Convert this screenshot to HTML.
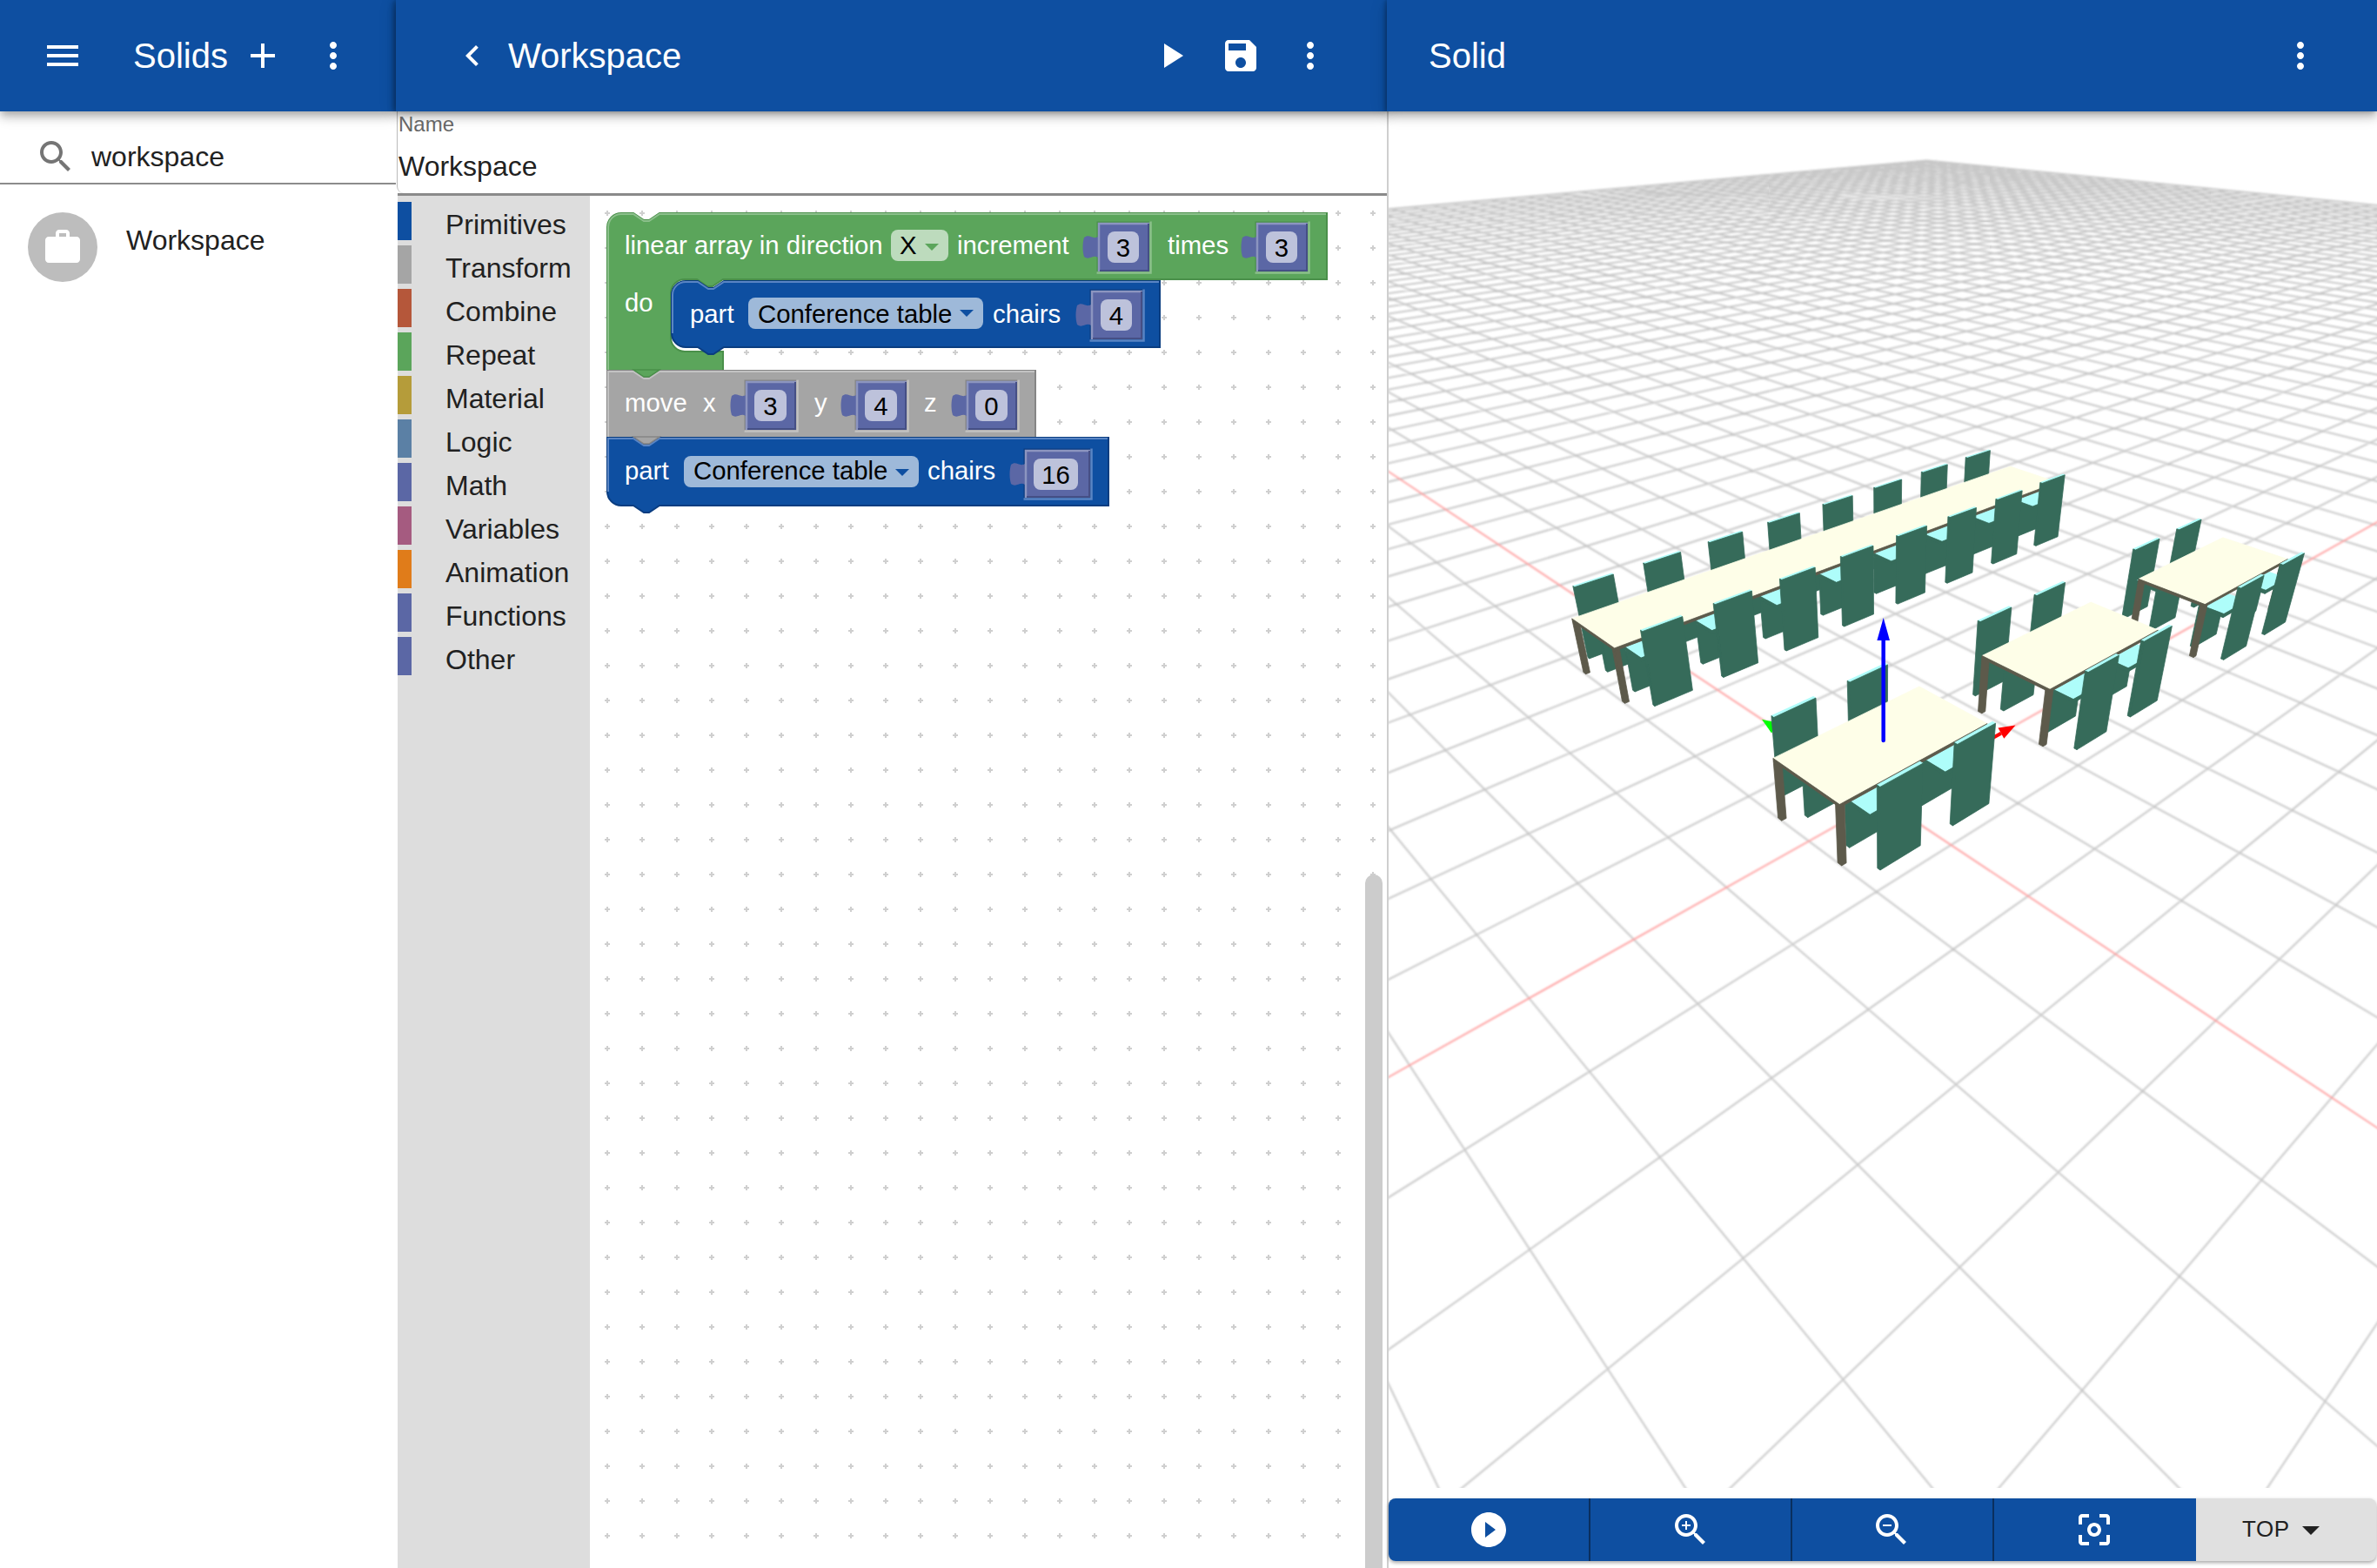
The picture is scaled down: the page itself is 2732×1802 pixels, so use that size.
<!DOCTYPE html>
<html><head><meta charset="utf-8">
<style>
html,body{margin:0;padding:0;width:2732px;height:1802px;overflow:hidden;background:#fff;font-family:"Liberation Sans",sans-serif;}
.abs{position:absolute;}
.hdr{position:absolute;top:0;height:128px;background:#0e4fa1;z-index:5;}
.t,svg.ic{z-index:8;}
.t{position:absolute;white-space:nowrap;line-height:1;}
svg.ic{position:absolute;width:48px;height:48px;fill:#fff;}
</style></head><body>
<!-- LEFT PANEL -->
<div class="abs" style="left:0;top:0;width:455px;height:1802px;background:#fff;"></div>
<div class="hdr" style="left:0;width:455px;box-shadow:0 4px 8px -2px rgba(0,0,0,.2),0 8px 10px 0 rgba(0,0,0,.14),0 2px 20px 0 rgba(0,0,0,.12);"></div>
<svg class="ic" style="left:48px;top:40px" viewBox="0 0 24 24"><path d="M3 18h18v-2H3v2zm0-5h18v-2H3v2zm0-7v2h18V6H3z"/></svg>
<div class="t" style="left:153px;top:44px;font-size:40px;color:#fff">Solids</div>
<svg class="ic" style="left:278px;top:40px" viewBox="0 0 24 24"><path d="M19 13h-6v6h-2v-6H5v-2h6V5h2v6h6v2z"/></svg>
<svg class="ic" style="left:359px;top:40px" viewBox="0 0 24 24"><path d="M12 8c1.1 0 2-.9 2-2s-.9-2-2-2-2 .9-2 2 .9 2 2 2zm0 2c-1.1 0-2 .9-2 2s.9 2 2 2 2-.9 2-2-.9-2-2-2zm0 6c-1.1 0-2 .9-2 2s.9 2 2 2 2-.9 2-2-.9-2-2-2z"/></svg>
<svg class="ic" style="left:40px;top:156px;fill:#757575" viewBox="0 0 24 24"><path d="M15.5 14h-.79l-.28-.27C15.41 12.59 16 11.11 16 9.5 16 5.91 13.09 3 9.5 3S3 5.91 3 9.5 5.91 16 9.5 16c1.61 0 3.09-.59 4.23-1.57l.27.28v.79l5 4.99L20.49 19l-4.99-5zm-6 0C7.01 14 5 11.99 5 9.5S7.01 5 9.5 5 14 7.01 14 9.5 11.99 14 9.5 14z"/></svg>
<div class="t" style="left:105px;top:164px;font-size:32px;color:#212121">workspace</div>
<div class="abs" style="left:0;top:210px;width:455px;height:2px;background:#8c8c8c"></div>
<div class="abs" style="left:32px;top:244px;width:80px;height:80px;border-radius:50%;background:#bdbdbd"></div>
<svg class="ic" style="left:48px;top:260px" viewBox="0 0 24 24"><path d="M20 6h-4V4c0-1.11-.89-2-2-2h-4c-1.11 0-2 .89-2 2v2H4c-1.11 0-1.99.89-1.99 2L2 19c0 1.11.89 2 2 2h16c1.11 0 2-.89 2-2V8c0-1.11-.89-2-2-2zm-6 0h-4V4h4v2z"/></svg>
<div class="t" style="left:145px;top:260px;font-size:32px;color:#212121">Workspace</div>

<!-- MIDDLE PANEL -->
<div class="abs" style="left:455px;top:0;width:1141px;height:1802px;background:#fff;"></div>
<div class="hdr" style="left:455px;width:1141px;z-index:6;box-shadow:0 4px 8px -2px rgba(0,0,0,.2),0 8px 10px 0 rgba(0,0,0,.14),0 2px 20px 0 rgba(0,0,0,.12),-3px 0 6px rgba(0,0,0,.25);"></div>
<svg class="ic" style="left:519px;top:40px" viewBox="0 0 24 24"><path d="M15.41 7.41L14 6l-6 6 6 6 1.41-1.41L10.83 12z"/></svg>
<div class="t" style="left:584px;top:44px;font-size:40px;color:#fff">Workspace</div>
<svg class="ic" style="left:1322px;top:40px" viewBox="0 0 24 24"><path d="M8 5v14l11-7z"/></svg>
<svg class="ic" style="left:1402px;top:40px" viewBox="0 0 24 24"><path d="M17 3H5c-1.11 0-2 .9-2 2v14c0 1.1.89 2 2 2h14c1.1 0 2-.9 2-2V7l-4-4zm-5 16c-1.66 0-3-1.34-3-3s1.34-3 3-3 3 1.34 3 3-1.34 3-3 3zm3-10H5V5h10v4z"/></svg>
<svg class="ic" style="left:1482px;top:40px" viewBox="0 0 24 24"><path d="M12 8c1.1 0 2-.9 2-2s-.9-2-2-2-2 .9-2 2 .9 2 2 2zm0 2c-1.1 0-2 .9-2 2s.9 2 2 2 2-.9 2-2-.9-2-2-2zm0 6c-1.1 0-2 .9-2 2s.9 2 2 2 2-.9 2-2-.9-2-2-2z"/></svg>
<!-- name field -->
<div class="abs" style="left:456px;top:128px;width:1138px;height:94px;background:#fff;border-left:1px solid #bbb;border-bottom-left-radius:8px;"></div>
<div class="abs" style="left:457px;top:222px;width:1137px;height:3px;background:#8a8a8a"></div>
<div class="t" style="left:458px;top:131px;font-size:24px;color:#666">Name</div>
<div class="t" style="left:458px;top:175px;font-size:32px;color:#212121">Workspace</div>

<div class="abs" style="left:457px;top:225px;width:221px;height:1577px;background:#dddddd"></div>
<div class="abs" style="left:457px;top:232px;width:16px;height:44px;background:#0e4fa1"></div>
<div class="t" style="left:512px;top:241.9px;font-size:32px;color:#212121">Primitives</div>
<div class="abs" style="left:457px;top:282px;width:16px;height:44px;background:#a5a5a5"></div>
<div class="t" style="left:512px;top:291.9px;font-size:32px;color:#212121">Transform</div>
<div class="abs" style="left:457px;top:332px;width:16px;height:44px;background:#b5573a"></div>
<div class="t" style="left:512px;top:341.9px;font-size:32px;color:#212121">Combine</div>
<div class="abs" style="left:457px;top:382px;width:16px;height:44px;background:#5ba55b"></div>
<div class="t" style="left:512px;top:391.9px;font-size:32px;color:#212121">Repeat</div>
<div class="abs" style="left:457px;top:432px;width:16px;height:44px;background:#b59c3a"></div>
<div class="t" style="left:512px;top:441.9px;font-size:32px;color:#212121">Material</div>
<div class="abs" style="left:457px;top:482px;width:16px;height:44px;background:#5b80a5"></div>
<div class="t" style="left:512px;top:491.9px;font-size:32px;color:#212121">Logic</div>
<div class="abs" style="left:457px;top:532px;width:16px;height:44px;background:#5b67a5"></div>
<div class="t" style="left:512px;top:541.9px;font-size:32px;color:#212121">Math</div>
<div class="abs" style="left:457px;top:582px;width:16px;height:44px;background:#a55b80"></div>
<div class="t" style="left:512px;top:591.9px;font-size:32px;color:#212121">Variables</div>
<div class="abs" style="left:457px;top:632px;width:16px;height:44px;background:#e07c1a"></div>
<div class="t" style="left:512px;top:641.9px;font-size:32px;color:#212121">Animation</div>
<div class="abs" style="left:457px;top:682px;width:16px;height:44px;background:#5b67a5"></div>
<div class="t" style="left:512px;top:691.9px;font-size:32px;color:#212121">Functions</div>
<div class="abs" style="left:457px;top:732px;width:16px;height:44px;background:#5b67a5"></div>
<div class="t" style="left:512px;top:741.9px;font-size:32px;color:#212121">Other</div>
<svg class="abs" style="left:678px;top:225px" width="916" height="1577" viewBox="678 225 916 1577" font-family="Liberation Sans" font-size="29.33"><defs><pattern id="gp" patternUnits="userSpaceOnUse" x="-2" y="-14" width="40" height="40"><rect x="17" y="18" width="6" height="2" fill="#cfcfcf"/><rect x="19" y="16" width="2" height="6" fill="#cfcfcf"/></pattern></defs><rect x="678" y="225" width="916" height="1577" fill="url(#gp)"/><path d="M698,261 A16,16 0 0 1 714,245 L728,245 l12,8 l6,0 l12,-8 L1525,245 L1525,321 L831,321 l-12,8 l-6,0 l-12,-8 L787,321 A16,16 0 0 0 771,337 L771,388 A16,16 0 0 0 787,404 L831,404 L831,426 L758,426 l-12,8 l-6,0 l-12,-8 L698,426 Z" fill="#5ba55b" stroke="#4a904a" stroke-width="2"/><path d="M699,426 L699,261 A15,15 0 0 1 714,246 L728,246 l12,8 l6,0 l12,-8 L1524,246" fill="none" stroke="#8cc08c" stroke-width="2"/><text x="718" y="292" fill="#fff">linear array in direction</text><rect x="1024" y="264" width="66" height="36" rx="8" fill="#bddbbd"/><text x="1034" y="292" fill="#000">X</text><path d="M1063,280 l16,0 l-8,8 z" fill="#5ba55b"/><text x="1100" y="292" fill="#fff">increment</text><text x="1342" y="292" fill="#fff">times</text><text x="718" y="358" fill="#fff">do</text><rect x="1260.5" y="254.5" width="62" height="59" fill="#4a904a"/><path d="M1322.5,254.5 V313.5 H1260.5" fill="none" stroke="#8cc08c" stroke-width="2.5"/><path d="M1262,256 H1321 V312 H1262 V296 c-6,-4 -10,4 -16,-1 c-2,-6 -2,-16 0,-22 c6,-5 10,3 16,-1 Z" fill="#5b67a5"/><path d="M1263,312 V257 H1321" fill="none" stroke="#8c95c0" stroke-width="2.5"/><path d="M1320,257 V311 H1264" fill="none" stroke="#454f85" stroke-width="2"/><rect x="1273" y="266" width="36" height="36" rx="8" fill="#bdc2db"/><text x="1291.0" y="294.5" text-anchor="middle" fill="#000">3</text><rect x="1442.5" y="254.5" width="62" height="59" fill="#4a904a"/><path d="M1504.5,254.5 V313.5 H1442.5" fill="none" stroke="#8cc08c" stroke-width="2.5"/><path d="M1444,256 H1503 V312 H1444 V296 c-6,-4 -10,4 -16,-1 c-2,-6 -2,-16 0,-22 c6,-5 10,3 16,-1 Z" fill="#5b67a5"/><path d="M1445,312 V257 H1503" fill="none" stroke="#8c95c0" stroke-width="2.5"/><path d="M1502,257 V311 H1446" fill="none" stroke="#454f85" stroke-width="2"/><rect x="1455" y="266" width="36" height="36" rx="8" fill="#bdc2db"/><text x="1473.0" y="294.5" text-anchor="middle" fill="#000">3</text><path d="M772,339 A16,16 0 0 1 788,323 L802,323 l12,8 l6,0 l12,-8 L1333,323 L1333,399 L832,399 l-12,8 l-6,0 l-12,-8 L788,399 A16,16 0 0 1 772,383 Z" fill="#0e4fa1" stroke="#0a3d80" stroke-width="2"/><path d="M773,383 L773,339 A15,15 0 0 1 788,324 L802,324 l12,8 l6,0 l12,-8 L1332,324" fill="none" stroke="#5a85c4" stroke-width="2"/><text x="793" y="371" fill="#fff">part</text><rect x="860" y="342" width="270" height="36" rx="8" fill="#9eb9d9"/><text x="871" y="371" fill="#000">Conference table</text><path d="M1103,356 l16,0 l-8,8 z" fill="#0e4fa1"/><text x="1141" y="371" fill="#fff">chairs</text><rect x="1252.5" y="332.5" width="62" height="59" fill="#0a3d80"/><path d="M1314.5,332.5 V391.5 H1252.5" fill="none" stroke="#5a85c4" stroke-width="2.5"/><path d="M1254,334 H1313 V390 H1254 V374 c-6,-4 -10,4 -16,-1 c-2,-6 -2,-16 0,-22 c6,-5 10,3 16,-1 Z" fill="#5b67a5"/><path d="M1255,390 V335 H1313" fill="none" stroke="#8c95c0" stroke-width="2.5"/><path d="M1312,335 V389 H1256" fill="none" stroke="#454f85" stroke-width="2"/><rect x="1265" y="344" width="36" height="36" rx="8" fill="#bdc2db"/><text x="1283.0" y="372.5" text-anchor="middle" fill="#000">4</text><path d="M698,426 L728,426 l12,8 l6,0 l12,-8 L1190,426 L1190,503 L758,503 l-12,8 l-6,0 l-12,-8 L698,503 Z" fill="#a5a5a5" stroke="#858585" stroke-width="2"/><path d="M699,503 L699,427 L728,427 l12,8 l6,0 l12,-8 L1189,427" fill="none" stroke="#c2c2c2" stroke-width="2"/><path d="M728,425 l12,8 l6,0 l12,-8 Z" fill="#5ba55b" stroke="#4a904a" stroke-width="1.5"/><text x="718" y="473" fill="#fff">move</text><text x="808" y="473" fill="#fff">x</text><text x="936" y="473" fill="#fff">y</text><text x="1062" y="473" fill="#fff">z</text><rect x="855.5" y="436.5" width="61" height="59" fill="#858585"/><path d="M916.5,436.5 V495.5 H855.5" fill="none" stroke="#c2c2c2" stroke-width="2.5"/><path d="M857,438 H915 V494 H857 V478 c-6,-4 -10,4 -16,-1 c-2,-6 -2,-16 0,-22 c6,-5 10,3 16,-1 Z" fill="#5b67a5"/><path d="M858,494 V439 H915" fill="none" stroke="#8c95c0" stroke-width="2.5"/><path d="M914,439 V493 H859" fill="none" stroke="#454f85" stroke-width="2"/><rect x="867" y="448" width="37" height="36" rx="8" fill="#bdc2db"/><text x="885.5" y="476.5" text-anchor="middle" fill="#000">3</text><rect x="982.5" y="436.5" width="61" height="59" fill="#858585"/><path d="M1043.5,436.5 V495.5 H982.5" fill="none" stroke="#c2c2c2" stroke-width="2.5"/><path d="M984,438 H1042 V494 H984 V478 c-6,-4 -10,4 -16,-1 c-2,-6 -2,-16 0,-22 c6,-5 10,3 16,-1 Z" fill="#5b67a5"/><path d="M985,494 V439 H1042" fill="none" stroke="#8c95c0" stroke-width="2.5"/><path d="M1041,439 V493 H986" fill="none" stroke="#454f85" stroke-width="2"/><rect x="994" y="448" width="37" height="36" rx="8" fill="#bdc2db"/><text x="1012.5" y="476.5" text-anchor="middle" fill="#000">4</text><rect x="1109.5" y="436.5" width="61" height="59" fill="#858585"/><path d="M1170.5,436.5 V495.5 H1109.5" fill="none" stroke="#c2c2c2" stroke-width="2.5"/><path d="M1111,438 H1169 V494 H1111 V478 c-6,-4 -10,4 -16,-1 c-2,-6 -2,-16 0,-22 c6,-5 10,3 16,-1 Z" fill="#5b67a5"/><path d="M1112,494 V439 H1169" fill="none" stroke="#8c95c0" stroke-width="2.5"/><path d="M1168,439 V493 H1113" fill="none" stroke="#454f85" stroke-width="2"/><rect x="1121" y="448" width="37" height="36" rx="8" fill="#bdc2db"/><text x="1139.5" y="476.5" text-anchor="middle" fill="#000">0</text><path d="M698,503 L728,503 l12,8 l6,0 l12,-8 L1274,503 L1274,581 L758,581 l-12,8 l-6,0 l-12,-8 L714,581 A16,16 0 0 1 698,565 Z" fill="#0e4fa1" stroke="#0a3d80" stroke-width="2"/><path d="M699,565 L699,504 L728,504 l12,8 l6,0 l12,-8 L1273,504" fill="none" stroke="#5a85c4" stroke-width="2"/><path d="M728,502 l12,8 l6,0 l12,-8 Z" fill="#a5a5a5" stroke="#858585" stroke-width="1.5"/><text x="718" y="551" fill="#fff">part</text><rect x="786" y="524" width="270" height="36" rx="8" fill="#9eb9d9"/><text x="797" y="551" fill="#000">Conference table</text><path d="M1029,539 l16,0 l-8,8 z" fill="#0e4fa1"/><text x="1066" y="551" fill="#fff">chairs</text><rect x="1176.5" y="515.5" width="78" height="58" fill="#0a3d80"/><path d="M1254.5,515.5 V573.5 H1176.5" fill="none" stroke="#5a85c4" stroke-width="2.5"/><path d="M1178,517 H1253 V572 H1178 V557 c-6,-4 -10,4 -16,-1 c-2,-6 -2,-16 0,-22 c6,-5 10,3 16,-1 Z" fill="#5b67a5"/><path d="M1179,572 V518 H1253" fill="none" stroke="#8c95c0" stroke-width="2.5"/><path d="M1252,518 V571 H1180" fill="none" stroke="#454f85" stroke-width="2"/><rect x="1188" y="527" width="51" height="36" rx="8" fill="#bdc2db"/><text x="1213.5" y="555.5" text-anchor="middle" fill="#000">16</text><path d="M1569,1802 V1015 A10,10 0 0 1 1589,1015 V1802 Z" fill="#cccccc"/></svg>
<div class="abs" style="left:1594px;top:128px;width:2px;height:1674px;background:#cfcfcf"></div>
<svg class="abs" style="left:1596px;top:128px" width="1136" height="1582" viewBox="1596 128 1136 1582">
<defs><filter id="gb" filterUnits="userSpaceOnUse" x="1596" y="128" width="1136" height="1582"><feGaussianBlur stdDeviation="0.8"/></filter></defs>
<g filter="url(#gb)"><path d="M1656.3,1716.0L1590.0,1578.4M2601.9,1716.0L2738.0,1512.0M1941.0,1716.0L1590.0,1178.1M2292.3,1716.0L2738.0,1193.4M2225.8,1716.0L1590.0,943.8M1982.6,1716.0L2738.0,988.7M2510.5,1716.0L1590.0,790.1M1673.0,1716.0L2738.0,846.2M2738.0,1666.8L1590.0,681.4M1590.0,1555.2L2738.0,741.2M2738.0,1460.0L1590.0,600.5M1590.0,1379.9L2738.0,660.6M2738.0,1172.6L1590.0,488.2M1590.0,1128.6L2738.0,545.1M2738.0,1068.8L1590.0,447.6M1590.0,1035.5L2738.0,502.3M2738.0,982.5L1590.0,413.9M1590.0,957.1L2738.0,466.3M2738.0,909.7L1590.0,385.4M1590.0,890.3L2738.0,435.6M2738.0,847.4L1590.0,361.1M1590.0,832.6L2738.0,409.1M2738.0,793.5L1590.0,340.0M1590.0,782.4L2738.0,386.0M2738.0,746.4L1590.0,321.6M1590.0,738.2L2738.0,365.7M2738.0,705.0L1590.0,305.4M1590.0,699.0L2738.0,347.7M2738.0,668.2L1590.0,291.0M1590.0,664.0L2738.0,331.6M2738.0,635.3L1590.0,278.2M1590.0,632.6L2738.0,317.2M2738.0,605.7L1590.0,266.6M1590.0,604.3L2738.0,304.2M2738.0,578.9L1590.0,256.1M1590.0,578.6L2738.0,292.3M2738.0,554.7L1590.0,246.6M1590.0,555.1L2738.0,281.6M2738.0,532.5L1598.3,240.1M1590.0,533.7L2738.0,271.7M2738.0,512.2L1622.2,237.9M1590.0,514.0L2738.0,262.6M2738.0,493.5L1645.5,235.8M1590.0,495.8L2738.0,254.3M2738.0,476.3L1668.3,233.8M1590.0,479.0L2738.0,246.6M2738.0,460.4L1690.7,231.8M1590.0,463.4L2738.0,239.4M2738.0,445.6L1712.5,229.8M1590.0,448.9L2724.8,235.2M2738.0,431.8L1733.9,227.9M1590.0,435.4L2702.4,233.0M2738.0,419.0L1754.8,226.0M1590.0,422.8L2680.6,230.8M2738.0,407.0L1775.3,224.1M1590.0,410.9L2659.3,228.7M2738.0,395.7L1795.4,222.3M1590.0,399.8L2638.4,226.6M2738.0,385.2L1815.0,220.5M1590.0,389.4L2618.1,224.6M2738.0,375.2L1834.3,218.8M1590.0,379.5L2598.2,222.6M2738.0,365.9L1853.1,217.1M1590.0,370.3L2578.7,220.7M2738.0,357.0L1871.6,215.4M1590.0,361.5L2559.7,218.8M2738.0,348.6L1889.8,213.8M1590.0,353.2L2541.1,217.0M2738.0,340.7L1907.5,212.2M1590.0,345.3L2522.9,215.1M2738.0,333.2L1925.0,210.6M1590.0,337.8L2505.0,213.4M2738.0,326.1L1942.1,209.0M1590.0,330.7L2487.6,211.6M2738.0,319.3L1958.9,207.5M1590.0,323.9L2470.5,209.9M2738.0,312.8L1975.3,206.0M1590.0,317.4L2453.8,208.3M2738.0,306.6L1991.5,204.6M1590.0,311.3L2437.4,206.6M2738.0,300.8L2007.3,203.1M1590.0,305.4L2421.3,205.0M2738.0,295.1L2022.9,201.7M1590.0,299.8L2405.6,203.5M2738.0,289.8L2038.2,200.4M1590.0,294.4L2390.2,201.9M2738.0,284.6L2053.2,199.0M1590.0,289.2L2375.1,200.4M2738.0,279.7L2068.0,197.7M1590.0,284.3L2360.3,199.0M2738.0,275.0L2082.4,196.4M1590.0,279.5L2345.7,197.5M2738.0,270.4L2096.7,195.1M1590.0,275.0L2331.5,196.1M2738.0,266.1L2110.7,193.8M1590.0,270.6L2317.5,194.7M2738.0,261.9L2124.4,192.6M1590.0,266.4L2303.7,193.3M2738.0,257.9L2137.9,191.3M1590.0,262.3L2290.3,192.0M2738.0,254.0L2151.2,190.1M1590.0,258.4L2277.1,190.7M2738.0,250.2L2164.3,189.0M1590.0,254.7L2264.1,189.4M2738.0,246.6L2177.1,187.8M1590.0,251.0L2251.3,188.1M2738.0,243.2L2189.8,186.7M1590.0,247.5L2238.8,186.9M2738.0,239.8L2202.2,185.5M1590.0,244.1L2226.5,185.6M2738.0,236.6L2214.4,184.4M1590.0,240.9L2214.4,184.4" stroke="#c8c8c8" stroke-width="2" fill="none"/>
<path d="M2738.0,1300.0L1590.0,538.0M1590.0,1241.2L2738.0,596.8" stroke="#ff9c9c" stroke-width="1.8" fill="none"/></g>
<path d="M2164.0,919.0L2299.9,842.7" stroke="#ff0000" stroke-width="4"/><path d="M2316.5,833.4L2303.3,848.8L2296.5,836.6Z" fill="#ff0000"/>
<path d="M2164.0,919.0L2040.0,836.7" stroke="#00ff00" stroke-width="4"/><path d="M2025.0,826.7L2043.8,830.8L2036.1,842.5Z" fill="#00ff00"/>
<path d="M2261.3,526.3L2287.4,517.7L2285.3,517.0L2259.2,525.6Z" fill="#aefdfa" stroke="#aefdfa" stroke-width="0.8" stroke-linejoin="round"/>
<path d="M2257.7,595.3L2255.7,594.5L2259.2,525.6L2261.3,526.3ZM2257.7,595.3L2282.9,585.8L2287.4,517.7L2261.3,526.3Z" fill="#366b5a" stroke="#366b5a" stroke-width="0.8" stroke-linejoin="round"/>
<path d="M2210.4,543.0L2238.3,533.9L2236.2,533.1L2208.3,542.3Z" fill="#aefdfa" stroke="#aefdfa" stroke-width="0.8" stroke-linejoin="round"/>
<path d="M2208.6,613.7L2206.6,612.9L2208.3,542.3L2210.4,543.0ZM2208.6,613.7L2235.5,603.6L2238.3,533.9L2210.4,543.0Z" fill="#366b5a" stroke="#366b5a" stroke-width="0.8" stroke-linejoin="round"/>
<path d="M2155.7,561.0L2185.7,551.1L2183.6,550.4L2153.7,560.2Z" fill="#aefdfa" stroke="#aefdfa" stroke-width="0.8" stroke-linejoin="round"/>
<path d="M2156.0,633.4L2154.1,632.5L2153.7,560.2L2155.7,561.0ZM2156.0,633.4L2184.9,622.6L2185.7,551.1L2155.7,561.0Z" fill="#366b5a" stroke="#366b5a" stroke-width="0.8" stroke-linejoin="round"/>
<path d="M2096.9,580.3L2129.2,569.7L2127.2,568.9L2094.9,579.4Z" fill="#aefdfa" stroke="#aefdfa" stroke-width="0.8" stroke-linejoin="round"/>
<path d="M2099.7,654.6L2097.7,653.6L2094.9,579.4L2096.9,580.3ZM2099.7,654.6L2130.6,643.0L2129.2,569.7L2096.9,580.3Z" fill="#366b5a" stroke="#366b5a" stroke-width="0.8" stroke-linejoin="round"/>
<path d="M2033.6,601.1L2068.4,589.7L2066.4,588.8L2031.6,600.2Z" fill="#aefdfa" stroke="#aefdfa" stroke-width="0.8" stroke-linejoin="round"/>
<path d="M2039.1,677.3L2037.2,676.2L2031.6,600.2L2033.6,601.1ZM2039.1,677.3L2072.4,664.8L2068.4,589.7L2033.6,601.1Z" fill="#366b5a" stroke="#366b5a" stroke-width="0.8" stroke-linejoin="round"/>
<path d="M1965.0,623.6L2002.7,611.3L2000.7,610.3L1963.1,622.6Z" fill="#aefdfa" stroke="#aefdfa" stroke-width="0.8" stroke-linejoin="round"/>
<path d="M1973.9,701.8L1972.0,700.7L1963.1,622.6L1965.0,623.6ZM1973.9,701.8L2009.7,688.3L2002.7,611.3L1965.0,623.6Z" fill="#366b5a" stroke="#366b5a" stroke-width="0.8" stroke-linejoin="round"/>
<path d="M1890.7,648.1L1931.6,634.6L1929.6,633.6L1888.7,647.0Z" fill="#aefdfa" stroke="#aefdfa" stroke-width="0.8" stroke-linejoin="round"/>
<path d="M1903.3,728.2L1901.4,727.0L1888.7,647.0L1890.7,648.1ZM1903.3,728.2L1942.1,713.7L1931.6,634.6L1890.7,648.1Z" fill="#366b5a" stroke="#366b5a" stroke-width="0.8" stroke-linejoin="round"/>
<path d="M1809.7,674.7L1854.3,660.0L1852.4,658.9L1807.8,673.5Z" fill="#aefdfa" stroke="#aefdfa" stroke-width="0.8" stroke-linejoin="round"/>
<path d="M1826.7,756.9L1825.0,755.6L1807.8,673.5L1809.7,674.7ZM1826.7,756.9L1868.9,741.1L1854.3,660.0L1809.7,674.7Z" fill="#366b5a" stroke="#366b5a" stroke-width="0.8" stroke-linejoin="round"/>
<path d="M2310.6,540.5L2313.4,539.6L2310.3,538.5L2307.5,539.5ZM2306.8,588.9L2303.7,587.8L2307.5,539.5L2310.6,540.5ZM2306.8,588.9L2309.5,587.9L2313.4,539.6L2310.6,540.5Z" fill="#5d5a4b" stroke="#5d5a4b" stroke-width="0.8" stroke-linejoin="round"/>
<path d="M2283.5,566.6L2309.2,557.3L2306.5,556.4L2280.8,565.7Z" fill="#aefdfa" stroke="#aefdfa" stroke-width="0.8" stroke-linejoin="round"/>
<path d="M2281.0,604.4L2278.4,603.4L2280.8,565.7L2283.5,566.6ZM2281.0,604.4L2306.2,594.6L2309.2,557.3L2283.5,566.6Z" fill="#366b5a" stroke="#366b5a" stroke-width="0.8" stroke-linejoin="round"/>
<path d="M2283.7,563.1L2309.4,553.9L2290.7,547.4L2264.9,556.4Z" fill="#aefdfa" stroke="#aefdfa" stroke-width="0.8" stroke-linejoin="round"/>
<path d="M2283.5,566.6L2264.8,559.8L2264.9,556.4L2283.7,563.1ZM2283.5,566.6L2309.2,557.3L2309.4,553.9L2283.7,563.1Z" fill="#366b5a" stroke="#366b5a" stroke-width="0.8" stroke-linejoin="round"/>
<path d="M2233.3,584.8L2260.8,574.8L2258.2,573.8L2230.7,583.7Z" fill="#aefdfa" stroke="#aefdfa" stroke-width="0.8" stroke-linejoin="round"/>
<path d="M2231.8,623.4L2229.3,622.3L2230.7,583.7L2233.3,584.8ZM2231.8,623.4L2258.8,613.0L2260.8,574.8L2233.3,584.8Z" fill="#366b5a" stroke="#366b5a" stroke-width="0.8" stroke-linejoin="round"/>
<path d="M2233.5,581.2L2261.0,571.3L2242.3,564.3L2214.7,573.9Z" fill="#aefdfa" stroke="#aefdfa" stroke-width="0.8" stroke-linejoin="round"/>
<path d="M2233.3,584.8L2214.6,577.5L2214.7,573.9L2233.5,581.2ZM2233.3,584.8L2260.8,574.8L2261.0,571.3L2233.5,581.2Z" fill="#366b5a" stroke="#366b5a" stroke-width="0.8" stroke-linejoin="round"/>
<path d="M2179.5,604.2L2209.1,593.5L2206.4,592.5L2176.9,603.1Z" fill="#aefdfa" stroke="#aefdfa" stroke-width="0.8" stroke-linejoin="round"/>
<path d="M2179.2,643.8L2176.6,642.7L2176.9,603.1L2179.5,604.2ZM2179.2,643.8L2208.1,632.6L2209.1,593.5L2179.5,604.2Z" fill="#366b5a" stroke="#366b5a" stroke-width="0.8" stroke-linejoin="round"/>
<path d="M2179.6,600.5L2209.1,589.9L2190.5,582.4L2160.9,592.8Z" fill="#aefdfa" stroke="#aefdfa" stroke-width="0.8" stroke-linejoin="round"/>
<path d="M2179.5,604.2L2160.9,596.4L2160.9,592.8L2179.6,600.5ZM2179.5,604.2L2209.1,593.5L2209.1,589.9L2179.6,600.5Z" fill="#366b5a" stroke="#366b5a" stroke-width="0.8" stroke-linejoin="round"/>
<path d="M2121.7,625.2L2153.5,613.7L2150.9,612.5L2119.1,624.0Z" fill="#aefdfa" stroke="#aefdfa" stroke-width="0.8" stroke-linejoin="round"/>
<path d="M2122.7,665.7L2120.1,664.5L2119.1,624.0L2121.7,625.2ZM2122.7,665.7L2153.7,653.7L2153.5,613.7L2121.7,625.2Z" fill="#366b5a" stroke="#366b5a" stroke-width="0.8" stroke-linejoin="round"/>
<path d="M2121.6,621.4L2153.4,609.9L2134.9,601.9L2103.1,613.0Z" fill="#aefdfa" stroke="#aefdfa" stroke-width="0.8" stroke-linejoin="round"/>
<path d="M2121.7,625.2L2103.2,616.8L2103.1,613.0L2121.6,621.4ZM2121.7,625.2L2153.5,613.7L2153.4,609.9L2121.6,621.4Z" fill="#366b5a" stroke="#366b5a" stroke-width="0.8" stroke-linejoin="round"/>
<path d="M2361.7,557.8L2364.5,556.7L2361.1,555.6L2358.3,556.6ZM2356.3,607.3L2353.1,606.1L2358.3,556.6L2361.7,557.8ZM2356.3,607.3L2359.0,606.2L2364.5,556.7L2361.7,557.8Z" fill="#5d5a4b" stroke="#5d5a4b" stroke-width="0.8" stroke-linejoin="round"/>
<path d="M2318.5,579.3L2344.2,569.6L2341.4,568.6L2315.8,578.3Z" fill="#aefdfa" stroke="#aefdfa" stroke-width="0.8" stroke-linejoin="round"/>
<path d="M2315.3,617.7L2312.6,616.6L2315.8,578.3L2318.5,579.3ZM2315.3,617.7L2340.4,607.4L2344.2,569.6L2318.5,579.3Z" fill="#366b5a" stroke="#366b5a" stroke-width="0.8" stroke-linejoin="round"/>
<path d="M2336.2,582.0L2361.9,572.1L2341.8,565.1L2316.1,574.7Z" fill="#aefdfa" stroke="#aefdfa" stroke-width="0.8" stroke-linejoin="round"/>
<path d="M2335.9,585.6L2315.8,578.3L2316.1,574.7L2336.2,582.0ZM2335.9,585.6L2361.5,575.6L2361.9,572.1L2336.2,582.0Z" fill="#366b5a" stroke="#366b5a" stroke-width="0.8" stroke-linejoin="round"/>
<path d="M2268.4,598.4L2295.9,587.9L2293.1,586.9L2265.6,597.3Z" fill="#aefdfa" stroke="#aefdfa" stroke-width="0.8" stroke-linejoin="round"/>
<path d="M2266.1,637.7L2263.4,636.6L2265.6,597.3L2268.4,598.4ZM2266.1,637.7L2293.1,626.7L2295.9,587.9L2268.4,598.4Z" fill="#366b5a" stroke="#366b5a" stroke-width="0.8" stroke-linejoin="round"/>
<path d="M2286.0,601.4L2313.6,590.8L2293.4,583.3L2265.8,593.6Z" fill="#aefdfa" stroke="#aefdfa" stroke-width="0.8" stroke-linejoin="round"/>
<path d="M2285.7,605.1L2265.6,597.3L2265.8,593.6L2286.0,601.4ZM2285.7,605.1L2313.3,594.4L2313.6,590.8L2286.0,601.4Z" fill="#366b5a" stroke="#366b5a" stroke-width="0.8" stroke-linejoin="round"/>
<path d="M2214.5,618.9L2244.1,607.6L2241.3,606.5L2211.7,617.7Z" fill="#aefdfa" stroke="#aefdfa" stroke-width="0.8" stroke-linejoin="round"/>
<path d="M2213.3,659.1L2210.6,657.9L2211.7,617.7L2214.5,618.9ZM2213.3,659.1L2242.3,647.4L2244.1,607.6L2214.5,618.9Z" fill="#366b5a" stroke="#366b5a" stroke-width="0.8" stroke-linejoin="round"/>
<path d="M2232.0,622.3L2261.6,610.8L2241.5,602.8L2211.8,614.0Z" fill="#aefdfa" stroke="#aefdfa" stroke-width="0.8" stroke-linejoin="round"/>
<path d="M2231.8,626.1L2211.7,617.7L2211.8,614.0L2232.0,622.3ZM2231.8,626.1L2261.4,614.6L2261.6,610.8L2232.0,622.3Z" fill="#366b5a" stroke="#366b5a" stroke-width="0.8" stroke-linejoin="round"/>
<path d="M2156.4,640.9L2188.3,628.8L2185.6,627.6L2153.7,639.7Z" fill="#aefdfa" stroke="#aefdfa" stroke-width="0.8" stroke-linejoin="round"/>
<path d="M2156.6,682.2L2153.9,680.9L2153.7,639.7L2156.4,640.9ZM2156.6,682.2L2187.8,669.5L2188.3,628.8L2156.4,640.9Z" fill="#366b5a" stroke="#366b5a" stroke-width="0.8" stroke-linejoin="round"/>
<path d="M2173.7,644.9L2205.7,632.5L2185.6,623.8L2153.7,635.8Z" fill="#aefdfa" stroke="#aefdfa" stroke-width="0.8" stroke-linejoin="round"/>
<path d="M2173.6,648.8L2153.7,639.7L2153.7,635.8L2173.7,644.9ZM2173.6,648.8L2205.6,636.3L2205.7,632.5L2173.7,644.9Z" fill="#366b5a" stroke="#366b5a" stroke-width="0.8" stroke-linejoin="round"/>
<path d="M2059.3,647.7L2093.6,635.3L2091.0,634.1L2056.8,646.4Z" fill="#aefdfa" stroke="#aefdfa" stroke-width="0.8" stroke-linejoin="round"/>
<path d="M2061.8,689.3L2059.3,688.0L2056.8,646.4L2059.3,647.7ZM2061.8,689.3L2095.2,676.3L2093.6,635.3L2059.3,647.7Z" fill="#366b5a" stroke="#366b5a" stroke-width="0.8" stroke-linejoin="round"/>
<path d="M2059.1,643.8L2093.4,631.5L2075.1,622.9L2040.8,634.8Z" fill="#aefdfa" stroke="#aefdfa" stroke-width="0.8" stroke-linejoin="round"/>
<path d="M2059.3,647.7L2041.1,638.7L2040.8,634.8L2059.1,643.8ZM2059.3,647.7L2093.6,635.3L2093.4,631.5L2059.1,643.8Z" fill="#366b5a" stroke="#366b5a" stroke-width="0.8" stroke-linejoin="round"/>
<path d="M1991.9,672.1L2029.0,658.7L2026.4,657.4L1989.3,670.8Z" fill="#aefdfa" stroke="#aefdfa" stroke-width="0.8" stroke-linejoin="round"/>
<path d="M1996.1,714.7L1993.7,713.3L1989.3,670.8L1991.9,672.1ZM1996.1,714.7L2032.2,700.8L2029.0,658.7L1991.9,672.1Z" fill="#366b5a" stroke="#366b5a" stroke-width="0.8" stroke-linejoin="round"/>
<path d="M1991.5,668.1L2028.6,654.8L2010.5,645.4L1973.5,658.4Z" fill="#aefdfa" stroke="#aefdfa" stroke-width="0.8" stroke-linejoin="round"/>
<path d="M1991.9,672.1L1974.0,662.3L1973.5,658.4L1991.5,668.1ZM1991.9,672.1L2029.0,658.7L2028.6,654.8L1991.5,668.1Z" fill="#366b5a" stroke="#366b5a" stroke-width="0.8" stroke-linejoin="round"/>
<path d="M1918.7,698.6L1958.9,684.0L1956.5,682.6L1916.2,697.1Z" fill="#aefdfa" stroke="#aefdfa" stroke-width="0.8" stroke-linejoin="round"/>
<path d="M1925.0,742.3L1922.6,740.7L1916.2,697.1L1918.7,698.6ZM1925.0,742.3L1964.1,727.1L1958.9,684.0L1918.7,698.6Z" fill="#366b5a" stroke="#366b5a" stroke-width="0.8" stroke-linejoin="round"/>
<path d="M1918.1,694.5L1958.5,680.0L1940.7,669.9L1900.6,683.9Z" fill="#aefdfa" stroke="#aefdfa" stroke-width="0.8" stroke-linejoin="round"/>
<path d="M1918.7,698.6L1901.2,688.0L1900.6,683.9L1918.1,694.5ZM1918.7,698.6L1958.9,684.0L1958.5,680.0L1918.1,694.5Z" fill="#366b5a" stroke="#366b5a" stroke-width="0.8" stroke-linejoin="round"/>
<path d="M1839.0,727.4L1882.9,711.6L1880.5,710.0L1836.6,725.8Z" fill="#aefdfa" stroke="#aefdfa" stroke-width="0.8" stroke-linejoin="round"/>
<path d="M1847.8,772.2L1845.4,770.5L1836.6,725.8L1839.0,727.4ZM1847.8,772.2L1890.3,755.8L1882.9,711.6L1839.0,727.4Z" fill="#366b5a" stroke="#366b5a" stroke-width="0.8" stroke-linejoin="round"/>
<path d="M1838.2,723.2L1882.2,707.4L1865.0,696.4L1821.3,711.7Z" fill="#aefdfa" stroke="#aefdfa" stroke-width="0.8" stroke-linejoin="round"/>
<path d="M1839.0,727.4L1822.1,715.9L1821.3,711.7L1838.2,723.2ZM1839.0,727.4L1882.9,711.6L1882.2,707.4L1838.2,723.2Z" fill="#366b5a" stroke="#366b5a" stroke-width="0.8" stroke-linejoin="round"/>
<path d="M1810.1,715.8L1815.2,714.0L1812.4,712.1L1807.3,713.9ZM1822.6,774.7L1819.9,772.6L1807.3,713.9L1810.1,715.8ZM1822.6,774.7L1827.5,772.8L1815.2,714.0L1810.1,715.8Z" fill="#5d5a4b" stroke="#5d5a4b" stroke-width="0.8" stroke-linejoin="round"/>
<path d="M2093.7,664.8L2128.2,651.7L2125.4,650.4L2091.0,663.4Z" fill="#aefdfa" stroke="#aefdfa" stroke-width="0.8" stroke-linejoin="round"/>
<path d="M2095.4,707.1L2092.7,705.7L2091.0,663.4L2093.7,664.8ZM2095.4,707.1L2129.0,693.4L2128.2,651.7L2093.7,664.8Z" fill="#366b5a" stroke="#366b5a" stroke-width="0.8" stroke-linejoin="round"/>
<path d="M2110.6,669.3L2145.3,655.8L2125.3,646.5L2090.8,659.5Z" fill="#aefdfa" stroke="#aefdfa" stroke-width="0.8" stroke-linejoin="round"/>
<path d="M2110.7,673.2L2091.0,663.4L2090.8,659.5L2110.6,669.3ZM2110.7,673.2L2145.3,659.8L2145.3,655.8L2110.6,669.3Z" fill="#366b5a" stroke="#366b5a" stroke-width="0.8" stroke-linejoin="round"/>
<path d="M2025.6,690.6L2063.1,676.4L2060.4,675.0L2023.0,689.2Z" fill="#aefdfa" stroke="#aefdfa" stroke-width="0.8" stroke-linejoin="round"/>
<path d="M2029.2,734.0L2026.6,732.5L2023.0,689.2L2025.6,690.6ZM2029.2,734.0L2065.6,719.2L2063.1,676.4L2025.6,690.6Z" fill="#366b5a" stroke="#366b5a" stroke-width="0.8" stroke-linejoin="round"/>
<path d="M2042.2,695.7L2079.8,681.2L2060.1,671.0L2022.6,685.1Z" fill="#aefdfa" stroke="#aefdfa" stroke-width="0.8" stroke-linejoin="round"/>
<path d="M2042.5,699.8L2023.0,689.2L2022.6,685.1L2042.2,695.7ZM2042.5,699.8L2080.0,685.2L2079.8,681.2L2042.2,695.7Z" fill="#366b5a" stroke="#366b5a" stroke-width="0.8" stroke-linejoin="round"/>
<path d="M1951.7,718.7L1992.4,703.3L1989.8,701.7L1949.1,717.1Z" fill="#aefdfa" stroke="#aefdfa" stroke-width="0.8" stroke-linejoin="round"/>
<path d="M1957.3,763.2L1954.8,761.5L1949.1,717.1L1951.7,718.7ZM1957.3,763.2L1996.9,747.1L1992.4,703.3L1951.7,718.7Z" fill="#366b5a" stroke="#366b5a" stroke-width="0.8" stroke-linejoin="round"/>
<path d="M1967.6,724.6L2008.7,708.7L1989.3,697.6L1948.5,713.0Z" fill="#aefdfa" stroke="#aefdfa" stroke-width="0.8" stroke-linejoin="round"/>
<path d="M1968.1,728.8L1949.1,717.1L1948.5,713.0L1967.6,724.6ZM1968.1,728.8L2009.1,712.8L2008.7,708.7L1967.6,724.6Z" fill="#366b5a" stroke="#366b5a" stroke-width="0.8" stroke-linejoin="round"/>
<path d="M1870.9,749.4L1915.4,732.5L1912.8,730.8L1868.4,747.7Z" fill="#aefdfa" stroke="#aefdfa" stroke-width="0.8" stroke-linejoin="round"/>
<path d="M1879.1,795.0L1876.6,793.2L1868.4,747.7L1870.9,749.4ZM1879.1,795.0L1922.2,777.5L1915.4,732.5L1870.9,749.4Z" fill="#366b5a" stroke="#366b5a" stroke-width="0.8" stroke-linejoin="round"/>
<path d="M1886.1,756.1L1931.1,738.7L1912.2,726.6L1867.6,743.4Z" fill="#aefdfa" stroke="#aefdfa" stroke-width="0.8" stroke-linejoin="round"/>
<path d="M1886.9,760.4L1868.4,747.7L1867.6,743.4L1886.1,756.1ZM1886.9,760.4L1931.7,743.0L1931.1,738.7L1886.1,756.1Z" fill="#366b5a" stroke="#366b5a" stroke-width="0.8" stroke-linejoin="round"/>
<path d="M1856.2,747.9L1861.4,746.0L1858.3,743.8L1853.1,745.8ZM1867.5,808.3L1864.5,806.1L1853.1,745.8L1856.2,747.9ZM1867.5,808.3L1872.5,806.3L1861.4,746.0L1856.2,747.9Z" fill="#5d5a4b" stroke="#5d5a4b" stroke-width="0.8" stroke-linejoin="round"/>
<path d="M1855.6,744.9L2364.7,554.2L2310.5,536.1L1806.7,710.9Z" fill="#fefee8" stroke="#fefee8" stroke-width="0.8" stroke-linejoin="round"/>
<path d="M1856.2,747.9L1807.3,713.9L1806.7,710.9L1855.6,744.9ZM1856.2,747.9L2364.5,556.7L2364.7,554.2L1855.6,744.9Z" fill="#5d5a4b" stroke="#5d5a4b" stroke-width="0.8" stroke-linejoin="round"/>
<path d="M2347.2,555.4L2373.2,545.8L2370.9,545.0L2344.8,554.6Z" fill="#aefdfa" stroke="#aefdfa" stroke-width="0.8" stroke-linejoin="round"/>
<path d="M2340.0,627.3L2337.7,626.4L2344.8,554.6L2347.2,555.4ZM2340.0,627.3L2365.1,616.7L2373.2,545.8L2347.2,555.4Z" fill="#366b5a" stroke="#366b5a" stroke-width="0.8" stroke-linejoin="round"/>
<path d="M2296.2,574.3L2324.2,563.9L2321.8,563.1L2293.9,573.4Z" fill="#aefdfa" stroke="#aefdfa" stroke-width="0.8" stroke-linejoin="round"/>
<path d="M2290.8,648.0L2288.6,647.0L2293.9,573.4L2296.2,574.3ZM2290.8,648.0L2317.8,636.6L2324.2,563.9L2296.2,574.3Z" fill="#366b5a" stroke="#366b5a" stroke-width="0.8" stroke-linejoin="round"/>
<path d="M2241.3,594.6L2271.5,583.5L2269.1,582.6L2238.9,593.7Z" fill="#aefdfa" stroke="#aefdfa" stroke-width="0.8" stroke-linejoin="round"/>
<path d="M2238.0,670.2L2235.8,669.2L2238.9,593.7L2241.3,594.6ZM2238.0,670.2L2267.0,658.0L2271.5,583.5L2241.3,594.6Z" fill="#366b5a" stroke="#366b5a" stroke-width="0.8" stroke-linejoin="round"/>
<path d="M2181.9,616.6L2214.6,604.5L2212.2,603.6L2179.6,615.6Z" fill="#aefdfa" stroke="#aefdfa" stroke-width="0.8" stroke-linejoin="round"/>
<path d="M2181.2,694.1L2178.9,693.0L2179.6,615.6L2181.9,616.6ZM2181.2,694.1L2212.4,681.0L2214.6,604.5L2181.9,616.6Z" fill="#366b5a" stroke="#366b5a" stroke-width="0.8" stroke-linejoin="round"/>
<path d="M2117.6,640.4L2153.0,627.3L2150.7,626.3L2115.3,639.4Z" fill="#aefdfa" stroke="#aefdfa" stroke-width="0.8" stroke-linejoin="round"/>
<path d="M2119.7,720.0L2117.5,718.8L2115.3,639.4L2117.6,640.4ZM2119.7,720.0L2153.5,705.8L2153.0,627.3L2117.6,640.4Z" fill="#366b5a" stroke="#366b5a" stroke-width="0.8" stroke-linejoin="round"/>
<path d="M2047.7,666.4L2086.2,652.1L2083.9,651.0L2045.4,665.2Z" fill="#aefdfa" stroke="#aefdfa" stroke-width="0.8" stroke-linejoin="round"/>
<path d="M2053.2,748.0L2051.0,746.7L2045.4,665.2L2047.7,666.4ZM2053.2,748.0L2089.8,732.6L2086.2,652.1L2047.7,666.4Z" fill="#366b5a" stroke="#366b5a" stroke-width="0.8" stroke-linejoin="round"/>
<path d="M1971.3,694.7L2013.4,679.1L2011.1,677.8L1969.1,693.4Z" fill="#aefdfa" stroke="#aefdfa" stroke-width="0.8" stroke-linejoin="round"/>
<path d="M1980.9,778.4L1978.7,777.0L1969.1,693.4L1971.3,694.7ZM1980.9,778.4L2020.7,761.7L2013.4,679.1L1971.3,694.7Z" fill="#366b5a" stroke="#366b5a" stroke-width="0.8" stroke-linejoin="round"/>
<path d="M1887.6,725.7L1933.8,708.6L1931.6,707.2L1885.5,724.2Z" fill="#aefdfa" stroke="#aefdfa" stroke-width="0.8" stroke-linejoin="round"/>
<path d="M1901.9,811.6L1899.9,810.1L1885.5,724.2L1887.6,725.7ZM1901.9,811.6L1945.4,793.3L1933.8,708.6L1887.6,725.7Z" fill="#366b5a" stroke="#366b5a" stroke-width="0.8" stroke-linejoin="round"/>
<path d="M2504.7,608.8L2530.1,597.0L2527.2,596.1L2501.8,607.8Z" fill="#aefdfa" stroke="#aefdfa" stroke-width="0.8" stroke-linejoin="round"/>
<path d="M2489.9,685.6L2487.2,684.6L2501.8,607.8L2504.7,608.8ZM2489.9,685.6L2514.5,672.8L2530.1,597.0L2504.7,608.8Z" fill="#366b5a" stroke="#366b5a" stroke-width="0.8" stroke-linejoin="round"/>
<path d="M2454.6,632.0L2482.1,619.2L2479.3,618.2L2451.7,630.9Z" fill="#aefdfa" stroke="#aefdfa" stroke-width="0.8" stroke-linejoin="round"/>
<path d="M2441.5,710.8L2438.8,709.7L2451.7,630.9L2454.6,632.0ZM2441.5,710.8L2468.1,697.0L2482.1,619.2L2454.6,632.0Z" fill="#366b5a" stroke="#366b5a" stroke-width="0.8" stroke-linejoin="round"/>
<path d="M2555.8,623.2L2558.5,621.9L2554.2,620.5L2551.5,621.8ZM2543.9,677.0L2539.7,675.5L2551.5,621.8L2555.8,623.2ZM2543.9,677.0L2546.5,675.6L2558.5,621.9L2555.8,623.2Z" fill="#5d5a4b" stroke="#5d5a4b" stroke-width="0.8" stroke-linejoin="round"/>
<path d="M2530.5,656.0L2555.4,643.3L2551.8,642.0L2526.9,654.7Z" fill="#aefdfa" stroke="#aefdfa" stroke-width="0.8" stroke-linejoin="round"/>
<path d="M2521.6,698.0L2518.1,696.6L2526.9,654.7L2530.5,656.0ZM2521.6,698.0L2546.1,684.7L2555.4,643.3L2530.5,656.0Z" fill="#366b5a" stroke="#366b5a" stroke-width="0.8" stroke-linejoin="round"/>
<path d="M2531.4,652.1L2556.2,639.4L2530.7,630.6L2505.6,642.9Z" fill="#aefdfa" stroke="#aefdfa" stroke-width="0.8" stroke-linejoin="round"/>
<path d="M2530.5,656.0L2504.9,646.7L2505.6,642.9L2531.4,652.1ZM2530.5,656.0L2555.4,643.3L2556.2,639.4L2531.4,652.1Z" fill="#366b5a" stroke="#366b5a" stroke-width="0.8" stroke-linejoin="round"/>
<path d="M2625.9,646.9L2628.5,645.4L2623.9,643.9L2621.3,645.3ZM2611.2,702.0L2606.8,700.4L2621.3,645.3L2625.9,646.9ZM2611.2,702.0L2613.8,700.5L2628.5,645.4L2625.9,646.9Z" fill="#5d5a4b" stroke="#5d5a4b" stroke-width="0.8" stroke-linejoin="round"/>
<path d="M2579.0,673.6L2603.5,660.1L2599.7,658.8L2575.1,672.2Z" fill="#aefdfa" stroke="#aefdfa" stroke-width="0.8" stroke-linejoin="round"/>
<path d="M2568.6,716.2L2564.9,714.8L2575.1,672.2L2579.0,673.6ZM2568.6,716.2L2592.7,702.2L2603.5,660.1L2579.0,673.6Z" fill="#366b5a" stroke="#366b5a" stroke-width="0.8" stroke-linejoin="round"/>
<path d="M2604.1,678.3L2628.5,664.5L2600.7,654.8L2576.1,668.2Z" fill="#aefdfa" stroke="#aefdfa" stroke-width="0.8" stroke-linejoin="round"/>
<path d="M2603.1,682.3L2575.1,672.2L2576.1,668.2L2604.1,678.3ZM2603.1,682.3L2627.4,668.4L2628.5,664.5L2604.1,678.3Z" fill="#366b5a" stroke="#366b5a" stroke-width="0.8" stroke-linejoin="round"/>
<path d="M2481.6,681.1L2508.5,667.3L2504.9,666.0L2477.9,679.7Z" fill="#aefdfa" stroke="#aefdfa" stroke-width="0.8" stroke-linejoin="round"/>
<path d="M2473.6,724.1L2470.0,722.7L2477.9,679.7L2481.6,681.1ZM2473.6,724.1L2500.0,709.7L2508.5,667.3L2481.6,681.1Z" fill="#366b5a" stroke="#366b5a" stroke-width="0.8" stroke-linejoin="round"/>
<path d="M2482.3,677.1L2509.3,663.4L2483.4,653.8L2456.3,667.1Z" fill="#aefdfa" stroke="#aefdfa" stroke-width="0.8" stroke-linejoin="round"/>
<path d="M2481.6,681.1L2455.6,671.1L2456.3,667.1L2482.3,677.1ZM2481.6,681.1L2508.5,667.3L2509.3,663.4L2482.3,677.1Z" fill="#366b5a" stroke="#366b5a" stroke-width="0.8" stroke-linejoin="round"/>
<path d="M2461.9,669.8L2465.0,668.3L2460.6,666.6L2457.5,668.1ZM2452.1,726.3L2447.8,724.5L2457.5,668.1L2461.9,669.8ZM2452.1,726.3L2455.1,724.6L2465.0,668.3L2461.9,669.8Z" fill="#5d5a4b" stroke="#5d5a4b" stroke-width="0.8" stroke-linejoin="round"/>
<path d="M2530.6,700.2L2557.2,685.5L2553.4,684.1L2526.7,698.7Z" fill="#aefdfa" stroke="#aefdfa" stroke-width="0.8" stroke-linejoin="round"/>
<path d="M2521.1,743.9L2517.3,742.4L2526.7,698.7L2530.6,700.2ZM2521.1,743.9L2547.2,728.7L2557.2,685.5L2530.6,700.2Z" fill="#366b5a" stroke="#366b5a" stroke-width="0.8" stroke-linejoin="round"/>
<path d="M2556.0,705.5L2582.5,690.5L2554.3,680.1L2527.6,694.6Z" fill="#aefdfa" stroke="#aefdfa" stroke-width="0.8" stroke-linejoin="round"/>
<path d="M2555.1,709.7L2526.7,698.7L2527.6,694.6L2556.0,705.5ZM2555.1,709.7L2581.5,694.6L2582.5,690.5L2556.0,705.5Z" fill="#366b5a" stroke="#366b5a" stroke-width="0.8" stroke-linejoin="round"/>
<path d="M2533.7,697.5L2536.8,695.9L2532.0,694.0L2528.9,695.7ZM2521.0,755.5L2516.4,753.5L2528.9,695.7L2533.7,697.5ZM2521.0,755.5L2524.0,753.7L2536.8,695.9L2533.7,697.5Z" fill="#5d5a4b" stroke="#5d5a4b" stroke-width="0.8" stroke-linejoin="round"/>
<path d="M2534.3,694.6L2629.3,642.6L2554.8,617.8L2458.0,665.3Z" fill="#fefee8" stroke="#fefee8" stroke-width="0.8" stroke-linejoin="round"/>
<path d="M2533.7,697.5L2457.5,668.1L2458.0,665.3L2534.3,694.6ZM2533.7,697.5L2628.5,645.4L2629.3,642.6L2534.3,694.6Z" fill="#5d5a4b" stroke="#5d5a4b" stroke-width="0.8" stroke-linejoin="round"/>
<path d="M2624.0,649.3L2648.5,635.8L2645.3,634.7L2620.7,648.1Z" fill="#aefdfa" stroke="#aefdfa" stroke-width="0.8" stroke-linejoin="round"/>
<path d="M2602.7,729.5L2599.6,728.3L2620.7,648.1L2624.0,649.3ZM2602.7,729.5L2626.6,714.9L2648.5,635.8L2624.0,649.3Z" fill="#366b5a" stroke="#366b5a" stroke-width="0.8" stroke-linejoin="round"/>
<path d="M2575.5,676.0L2602.2,661.3L2598.9,660.1L2572.2,674.8Z" fill="#aefdfa" stroke="#aefdfa" stroke-width="0.8" stroke-linejoin="round"/>
<path d="M2555.7,758.3L2552.5,757.0L2572.2,674.8L2575.5,676.0ZM2555.7,758.3L2581.6,742.5L2602.2,661.3L2575.5,676.0Z" fill="#366b5a" stroke="#366b5a" stroke-width="0.8" stroke-linejoin="round"/>
<path d="M2341.0,684.6L2373.6,669.4L2370.7,668.3L2338.1,683.3Z" fill="#aefdfa" stroke="#aefdfa" stroke-width="0.8" stroke-linejoin="round"/>
<path d="M2332.3,767.6L2329.6,766.2L2338.1,683.3L2341.0,684.6ZM2332.3,767.6L2363.6,751.3L2373.6,669.4L2341.0,684.6Z" fill="#366b5a" stroke="#366b5a" stroke-width="0.8" stroke-linejoin="round"/>
<path d="M2276.1,714.6L2311.9,698.0L2309.0,696.7L2273.2,713.2Z" fill="#aefdfa" stroke="#aefdfa" stroke-width="0.8" stroke-linejoin="round"/>
<path d="M2270.4,799.8L2267.6,798.3L2273.2,713.2L2276.1,714.6ZM2270.4,799.8L2304.5,782.0L2311.9,698.0L2276.1,714.6Z" fill="#366b5a" stroke="#366b5a" stroke-width="0.8" stroke-linejoin="round"/>
<path d="M2403.8,698.6L2407.2,696.9L2402.8,695.1L2399.4,696.8ZM2395.5,756.6L2391.3,754.6L2399.4,696.8L2403.8,698.6ZM2395.5,756.6L2398.9,754.8L2407.2,696.9L2403.8,698.6Z" fill="#5d5a4b" stroke="#5d5a4b" stroke-width="0.8" stroke-linejoin="round"/>
<path d="M2370.4,738.1L2402.4,721.8L2398.7,720.2L2366.7,736.5Z" fill="#aefdfa" stroke="#aefdfa" stroke-width="0.8" stroke-linejoin="round"/>
<path d="M2364.8,783.3L2361.2,781.6L2366.7,736.5L2370.4,738.1ZM2364.8,783.3L2396.0,766.4L2402.4,721.8L2370.4,738.1Z" fill="#366b5a" stroke="#366b5a" stroke-width="0.8" stroke-linejoin="round"/>
<path d="M2371.0,733.9L2403.0,717.6L2376.7,706.2L2344.6,722.0Z" fill="#aefdfa" stroke="#aefdfa" stroke-width="0.8" stroke-linejoin="round"/>
<path d="M2370.4,738.1L2344.1,726.2L2344.6,722.0L2371.0,733.9ZM2370.4,738.1L2402.4,721.8L2403.0,717.6L2371.0,733.9Z" fill="#366b5a" stroke="#366b5a" stroke-width="0.8" stroke-linejoin="round"/>
<path d="M2476.4,729.0L2479.8,727.2L2474.9,725.2L2471.5,727.0ZM2465.1,788.5L2460.5,786.4L2471.5,727.0L2476.4,729.0ZM2465.1,788.5L2468.4,786.6L2479.8,727.2L2476.4,729.0Z" fill="#5d5a4b" stroke="#5d5a4b" stroke-width="0.8" stroke-linejoin="round"/>
<path d="M2420.4,760.8L2452.1,743.4L2448.2,741.7L2416.4,759.0Z" fill="#aefdfa" stroke="#aefdfa" stroke-width="0.8" stroke-linejoin="round"/>
<path d="M2413.1,806.8L2409.3,805.0L2416.4,759.0L2420.4,760.8ZM2413.1,806.8L2444.2,788.8L2452.1,743.4L2420.4,760.8Z" fill="#366b5a" stroke="#366b5a" stroke-width="0.8" stroke-linejoin="round"/>
<path d="M2446.1,767.8L2477.8,749.9L2448.9,737.4L2417.1,754.7Z" fill="#aefdfa" stroke="#aefdfa" stroke-width="0.8" stroke-linejoin="round"/>
<path d="M2445.4,772.2L2416.4,759.0L2417.1,754.7L2446.1,767.8ZM2445.4,772.2L2477.0,754.2L2477.8,749.9L2446.1,767.8Z" fill="#366b5a" stroke="#366b5a" stroke-width="0.8" stroke-linejoin="round"/>
<path d="M2307.0,770.7L2342.0,752.7L2338.3,751.0L2303.3,768.8Z" fill="#aefdfa" stroke="#aefdfa" stroke-width="0.8" stroke-linejoin="round"/>
<path d="M2302.9,817.0L2299.3,815.1L2303.3,768.8L2307.0,770.7ZM2302.9,817.0L2337.0,798.5L2342.0,752.7L2307.0,770.7Z" fill="#366b5a" stroke="#366b5a" stroke-width="0.8" stroke-linejoin="round"/>
<path d="M2307.4,766.3L2342.5,748.5L2316.0,736.0L2280.9,753.3Z" fill="#aefdfa" stroke="#aefdfa" stroke-width="0.8" stroke-linejoin="round"/>
<path d="M2307.0,770.7L2280.6,757.6L2280.9,753.3L2307.4,766.3ZM2307.0,770.7L2342.0,752.7L2342.5,748.5L2307.4,766.3Z" fill="#366b5a" stroke="#366b5a" stroke-width="0.8" stroke-linejoin="round"/>
<path d="M2282.2,758.9L2286.3,756.8L2281.9,754.7L2277.8,756.7ZM2277.8,819.8L2273.5,817.5L2277.8,756.7L2282.2,758.9ZM2277.8,819.8L2281.8,817.6L2286.3,756.8L2282.2,758.9Z" fill="#5d5a4b" stroke="#5d5a4b" stroke-width="0.8" stroke-linejoin="round"/>
<path d="M2357.2,795.6L2392.1,776.4L2388.1,774.5L2353.2,793.6Z" fill="#aefdfa" stroke="#aefdfa" stroke-width="0.8" stroke-linejoin="round"/>
<path d="M2351.5,842.7L2347.6,840.7L2353.2,793.6L2357.2,795.6ZM2351.5,842.7L2385.5,822.9L2392.1,776.4L2357.2,795.6Z" fill="#366b5a" stroke="#366b5a" stroke-width="0.8" stroke-linejoin="round"/>
<path d="M2383.0,803.6L2417.9,783.9L2388.7,770.2L2353.7,789.2Z" fill="#aefdfa" stroke="#aefdfa" stroke-width="0.8" stroke-linejoin="round"/>
<path d="M2382.4,808.1L2353.2,793.6L2353.7,789.2L2383.0,803.6ZM2382.4,808.1L2417.2,788.3L2417.9,783.9L2383.0,803.6Z" fill="#366b5a" stroke="#366b5a" stroke-width="0.8" stroke-linejoin="round"/>
<path d="M2355.7,795.4L2359.8,793.1L2354.8,790.7L2350.8,792.9ZM2348.1,857.8L2343.4,855.3L2350.8,792.9L2355.7,795.4ZM2348.1,857.8L2352.1,855.5L2359.8,793.1L2355.7,795.4Z" fill="#5d5a4b" stroke="#5d5a4b" stroke-width="0.8" stroke-linejoin="round"/>
<path d="M2356.1,792.2L2480.3,724.1L2403.2,692.1L2278.0,753.6Z" fill="#fefee8" stroke="#fefee8" stroke-width="0.8" stroke-linejoin="round"/>
<path d="M2355.7,795.4L2277.8,756.7L2278.0,753.6L2356.1,792.2ZM2355.7,795.4L2479.8,727.2L2480.3,724.1L2356.1,792.2Z" fill="#5d5a4b" stroke="#5d5a4b" stroke-width="0.8" stroke-linejoin="round"/>
<path d="M2464.3,737.2L2496.4,719.5L2493.0,718.2L2460.9,735.8Z" fill="#aefdfa" stroke="#aefdfa" stroke-width="0.8" stroke-linejoin="round"/>
<path d="M2448.4,824.0L2445.2,822.4L2460.9,735.8L2464.3,737.2ZM2448.4,824.0L2479.3,805.1L2496.4,719.5L2464.3,737.2Z" fill="#366b5a" stroke="#366b5a" stroke-width="0.8" stroke-linejoin="round"/>
<path d="M2400.1,772.6L2435.5,753.0L2432.1,751.5L2396.6,771.0Z" fill="#aefdfa" stroke="#aefdfa" stroke-width="0.8" stroke-linejoin="round"/>
<path d="M2387.0,861.6L2383.8,859.9L2396.6,771.0L2400.1,772.6ZM2387.0,861.6L2420.9,840.8L2435.5,753.0L2400.1,772.6Z" fill="#366b5a" stroke="#366b5a" stroke-width="0.8" stroke-linejoin="round"/>
<path d="M2126.1,784.0L2169.6,763.9L2166.7,762.3L2123.2,782.4Z" fill="#aefdfa" stroke="#aefdfa" stroke-width="0.8" stroke-linejoin="round"/>
<path d="M2128.2,873.7L2125.5,872.0L2123.2,782.4L2126.1,784.0ZM2128.2,873.7L2169.3,852.4L2169.6,763.9L2126.1,784.0Z" fill="#366b5a" stroke="#366b5a" stroke-width="0.8" stroke-linejoin="round"/>
<path d="M2038.7,824.5L2087.0,802.1L2084.2,800.4L2035.9,822.6Z" fill="#aefdfa" stroke="#aefdfa" stroke-width="0.8" stroke-linejoin="round"/>
<path d="M2046.1,916.5L2043.4,914.5L2035.9,822.6L2038.7,824.5ZM2046.1,916.5L2091.5,892.9L2087.0,802.1L2038.7,824.5Z" fill="#366b5a" stroke="#366b5a" stroke-width="0.8" stroke-linejoin="round"/>
<path d="M2205.8,796.8L2210.3,794.5L2205.9,792.1L2201.4,794.3ZM2204.2,859.3L2199.9,856.7L2201.4,794.3L2205.8,796.8ZM2204.2,859.3L2208.5,856.9L2210.3,794.5L2205.8,796.8Z" fill="#5d5a4b" stroke="#5d5a4b" stroke-width="0.8" stroke-linejoin="round"/>
<path d="M2160.3,845.9L2202.8,824.1L2199.1,822.0L2156.6,843.7Z" fill="#aefdfa" stroke="#aefdfa" stroke-width="0.8" stroke-linejoin="round"/>
<path d="M2160.4,894.6L2156.8,892.3L2156.6,843.7L2160.3,845.9ZM2160.4,894.6L2201.6,872.1L2202.8,824.1L2160.3,845.9Z" fill="#366b5a" stroke="#366b5a" stroke-width="0.8" stroke-linejoin="round"/>
<path d="M2160.3,841.4L2203.0,819.6L2176.6,804.6L2134.1,825.5Z" fill="#aefdfa" stroke="#aefdfa" stroke-width="0.8" stroke-linejoin="round"/>
<path d="M2160.3,845.9L2134.1,830.0L2134.1,825.5L2160.3,841.4ZM2160.3,845.9L2202.8,824.1L2203.0,819.6L2160.3,841.4Z" fill="#366b5a" stroke="#366b5a" stroke-width="0.8" stroke-linejoin="round"/>
<path d="M2279.2,837.4L2283.8,834.9L2278.8,832.2L2274.3,834.6ZM2274.4,901.5L2269.7,898.6L2274.3,834.6L2279.2,837.4ZM2274.4,901.5L2278.8,898.9L2283.8,834.9L2279.2,837.4Z" fill="#5d5a4b" stroke="#5d5a4b" stroke-width="0.8" stroke-linejoin="round"/>
<path d="M2210.3,876.4L2253.0,852.9L2249.0,850.6L2206.3,874.0Z" fill="#aefdfa" stroke="#aefdfa" stroke-width="0.8" stroke-linejoin="round"/>
<path d="M2208.8,925.9L2204.9,923.4L2206.3,874.0L2210.3,876.4ZM2208.8,925.9L2250.2,901.8L2253.0,852.9L2210.3,876.4Z" fill="#366b5a" stroke="#366b5a" stroke-width="0.8" stroke-linejoin="round"/>
<path d="M2235.8,887.1L2278.6,862.8L2249.3,846.0L2206.5,869.3Z" fill="#aefdfa" stroke="#aefdfa" stroke-width="0.8" stroke-linejoin="round"/>
<path d="M2235.5,891.8L2206.3,874.0L2206.5,869.3L2235.8,887.1ZM2235.5,891.8L2278.3,867.4L2278.6,862.8L2235.8,887.1Z" fill="#366b5a" stroke="#366b5a" stroke-width="0.8" stroke-linejoin="round"/>
<path d="M2074.8,889.8L2122.1,865.5L2118.4,863.2L2071.2,887.3Z" fill="#aefdfa" stroke="#aefdfa" stroke-width="0.8" stroke-linejoin="round"/>
<path d="M2077.8,939.5L2074.3,937.0L2071.2,887.3L2074.8,889.8ZM2077.8,939.5L2123.5,914.7L2122.1,865.5L2074.8,889.8Z" fill="#366b5a" stroke="#366b5a" stroke-width="0.8" stroke-linejoin="round"/>
<path d="M2074.5,885.1L2122.0,860.9L2095.9,844.2L2048.7,867.4Z" fill="#aefdfa" stroke="#aefdfa" stroke-width="0.8" stroke-linejoin="round"/>
<path d="M2074.8,889.8L2049.1,872.0L2048.7,867.4L2074.5,885.1ZM2074.8,889.8L2122.1,865.5L2122.0,860.9L2074.5,885.1Z" fill="#366b5a" stroke="#366b5a" stroke-width="0.8" stroke-linejoin="round"/>
<path d="M2042.5,877.8L2048.0,875.0L2043.7,872.0L2038.2,874.7ZM2047.7,943.2L2043.6,940.1L2038.2,874.7L2042.5,877.8ZM2047.7,943.2L2053.1,940.4L2048.0,875.0L2042.5,877.8Z" fill="#5d5a4b" stroke="#5d5a4b" stroke-width="0.8" stroke-linejoin="round"/>
<path d="M2124.2,923.8L2171.9,897.6L2167.9,895.0L2120.3,921.1Z" fill="#aefdfa" stroke="#aefdfa" stroke-width="0.8" stroke-linejoin="round"/>
<path d="M2125.6,974.3L2121.8,971.5L2120.3,921.1L2124.2,923.8ZM2125.6,974.3L2171.6,947.5L2171.9,897.6L2124.2,923.8Z" fill="#366b5a" stroke="#366b5a" stroke-width="0.8" stroke-linejoin="round"/>
<path d="M2149.2,936.2L2197.2,909.0L2167.9,890.3L2120.2,916.3Z" fill="#aefdfa" stroke="#aefdfa" stroke-width="0.8" stroke-linejoin="round"/>
<path d="M2149.2,941.0L2120.3,921.1L2120.2,916.3L2149.2,936.2ZM2149.2,941.0L2197.1,913.7L2197.2,909.0L2149.2,936.2Z" fill="#366b5a" stroke="#366b5a" stroke-width="0.8" stroke-linejoin="round"/>
<path d="M2114.4,927.9L2120.1,924.8L2115.2,921.4L2109.6,924.5ZM2116.7,994.9L2112.1,991.4L2109.6,924.5L2114.4,927.9ZM2116.7,994.9L2122.1,991.7L2120.1,924.8L2114.4,927.9Z" fill="#5d5a4b" stroke="#5d5a4b" stroke-width="0.8" stroke-linejoin="round"/>
<path d="M2114.3,924.5L2284.0,831.6L2206.0,788.9L2037.9,871.4Z" fill="#fefee8" stroke="#fefee8" stroke-width="0.8" stroke-linejoin="round"/>
<path d="M2114.4,927.9L2038.2,874.7L2037.9,871.4L2114.3,924.5ZM2114.4,927.9L2283.8,834.9L2284.0,831.6L2114.3,924.5Z" fill="#5d5a4b" stroke="#5d5a4b" stroke-width="0.8" stroke-linejoin="round"/>
<path d="M2249.7,855.4L2293.6,831.2L2290.1,829.3L2246.2,853.4Z" fill="#aefdfa" stroke="#aefdfa" stroke-width="0.8" stroke-linejoin="round"/>
<path d="M2244.4,948.9L2241.2,946.8L2246.2,853.4L2249.7,855.4ZM2244.4,948.9L2285.9,923.5L2293.6,831.2L2249.7,855.4Z" fill="#366b5a" stroke="#366b5a" stroke-width="0.8" stroke-linejoin="round"/>
<path d="M2160.8,904.4L2210.1,877.2L2206.6,875.1L2157.3,902.1Z" fill="#aefdfa" stroke="#aefdfa" stroke-width="0.8" stroke-linejoin="round"/>
<path d="M2161.0,1000.0L2157.8,997.7L2157.3,902.1L2160.8,904.4ZM2161.0,1000.0L2207.2,971.7L2210.1,877.2L2160.8,904.4Z" fill="#366b5a" stroke="#366b5a" stroke-width="0.8" stroke-linejoin="round"/>
<path d="M2164.7,851 L2164.7,733" stroke="#0000ff" stroke-width="4.5" stroke-linecap="round"/>
<path d="M2164.7,710 L2172,736 L2157.4,736 Z" fill="#0000ff"/>
</svg>
<!-- RIGHT PANEL HEADER -->
<div class="hdr" style="z-index:7;left:1594px;width:1138px;box-shadow:0 4px 8px -2px rgba(0,0,0,.2),0 8px 10px 0 rgba(0,0,0,.14),0 2px 20px 0 rgba(0,0,0,.12),-2px 0 4px rgba(0,0,0,.2);"></div>
<div class="t" style="left:1642px;top:44px;font-size:40px;color:#fff">Solid</div>
<svg class="ic" style="left:2620px;top:40px" viewBox="0 0 24 24"><path d="M12 8c1.1 0 2-.9 2-2s-.9-2-2-2-2 .9-2 2 .9 2 2 2zm0 2c-1.1 0-2 .9-2 2s.9 2 2 2 2-.9 2-2-.9-2-2-2zm0 6c-1.1 0-2 .9-2 2s.9 2 2 2 2-.9 2-2-.9-2-2-2z"/></svg>
<!-- toolbar -->
<div class="abs" style="left:1596px;top:1722px;width:1135px;height:72px;border-radius:8px;background:#e0e0e0;box-shadow:0 2px 4px rgba(0,0,0,.35);overflow:hidden">
  <div class="abs" style="left:0;top:0;width:928px;height:72px;background:#0e4fa1"></div>
  <div class="abs" style="left:230px;top:0;width:2px;height:72px;background:#0a2f5e"></div>
  <div class="abs" style="left:462px;top:0;width:2px;height:72px;background:#0a2f5e"></div>
  <div class="abs" style="left:694px;top:0;width:2px;height:72px;background:#0a2f5e"></div>
</div>
<svg class="ic" style="left:1687px;top:1734px" viewBox="0 0 24 24"><path d="M12 2C6.48 2 2 6.48 2 12s4.48 10 10 10 10-4.48 10-10S17.52 2 12 2zm-2 14.5v-9l6 4.5-6 4.5z"/></svg>
<svg class="ic" style="left:1919px;top:1734px" viewBox="0 0 24 24"><path d="M15.5 14h-.79l-.28-.27C15.41 12.59 16 11.11 16 9.5 16 5.910 13.09 3 9.5 3S3 5.91 3 9.5 5.91 16 9.5 16c1.61 0 3.09-.59 4.23-1.57l.27.28v.79l5 4.99L20.49 19l-4.99-5zm-6 0C7.01 14 5 11.99 5 9.5S7.01 5 9.5 5 14 7.01 14 9.5 11.99 14 9.5 14zm2.5-4h-2v2H9v-2H7V9h2V7h1v2h2v1z"/></svg>
<svg class="ic" style="left:2150px;top:1734px" viewBox="0 0 24 24"><path d="M15.5 14h-.79l-.28-.27C15.41 12.59 16 11.11 16 9.5 16 5.91 13.09 3 9.5 3S3 5.91 3 9.5 5.91 16 9.5 16c1.61 0 3.09-.59 4.23-1.57l.27.28v.79l5 4.99L20.49 19l-4.99-5zm-6 0C7.01 14 5 11.99 5 9.5S7.01 5 9.5 5 14 7.01 14 9.5 11.99 14 9.5 14zM7 9h5v1H7z"/></svg>
<svg class="ic" style="left:2383px;top:1734px" viewBox="0 0 24 24"><path d="M5 15H3v4c0 1.1.9 2 2 2h4v-2H5v-4zM5 5h4V3H5c-1.1 0-2 .9-2 2v4h2V5zm14-2h-4v2h4v4h2V5c0-1.1-.9-2-2-2zm0 16h-4v2h4c1.1 0 2-.9 2-2v-4h-2v4zM12 8c-2.21 0-4 1.79-4 4s1.79 4 4 4 4-1.790 4-4-1.79-4-4-4zm0 6c-1.1 0-2-.9-2-2s.9-2 2-2 2 .9 2 2-.9 2-2 2z"/></svg>
<div class="t" style="left:2577px;top:1744px;font-size:26px;color:#212121;letter-spacing:0.5px">TOP</div>
<svg class="ic" style="left:2632px;top:1734px;fill:#212121" viewBox="0 0 24 24"><path d="M7 10l5 5 5-5z"/></svg>
</body></html>
